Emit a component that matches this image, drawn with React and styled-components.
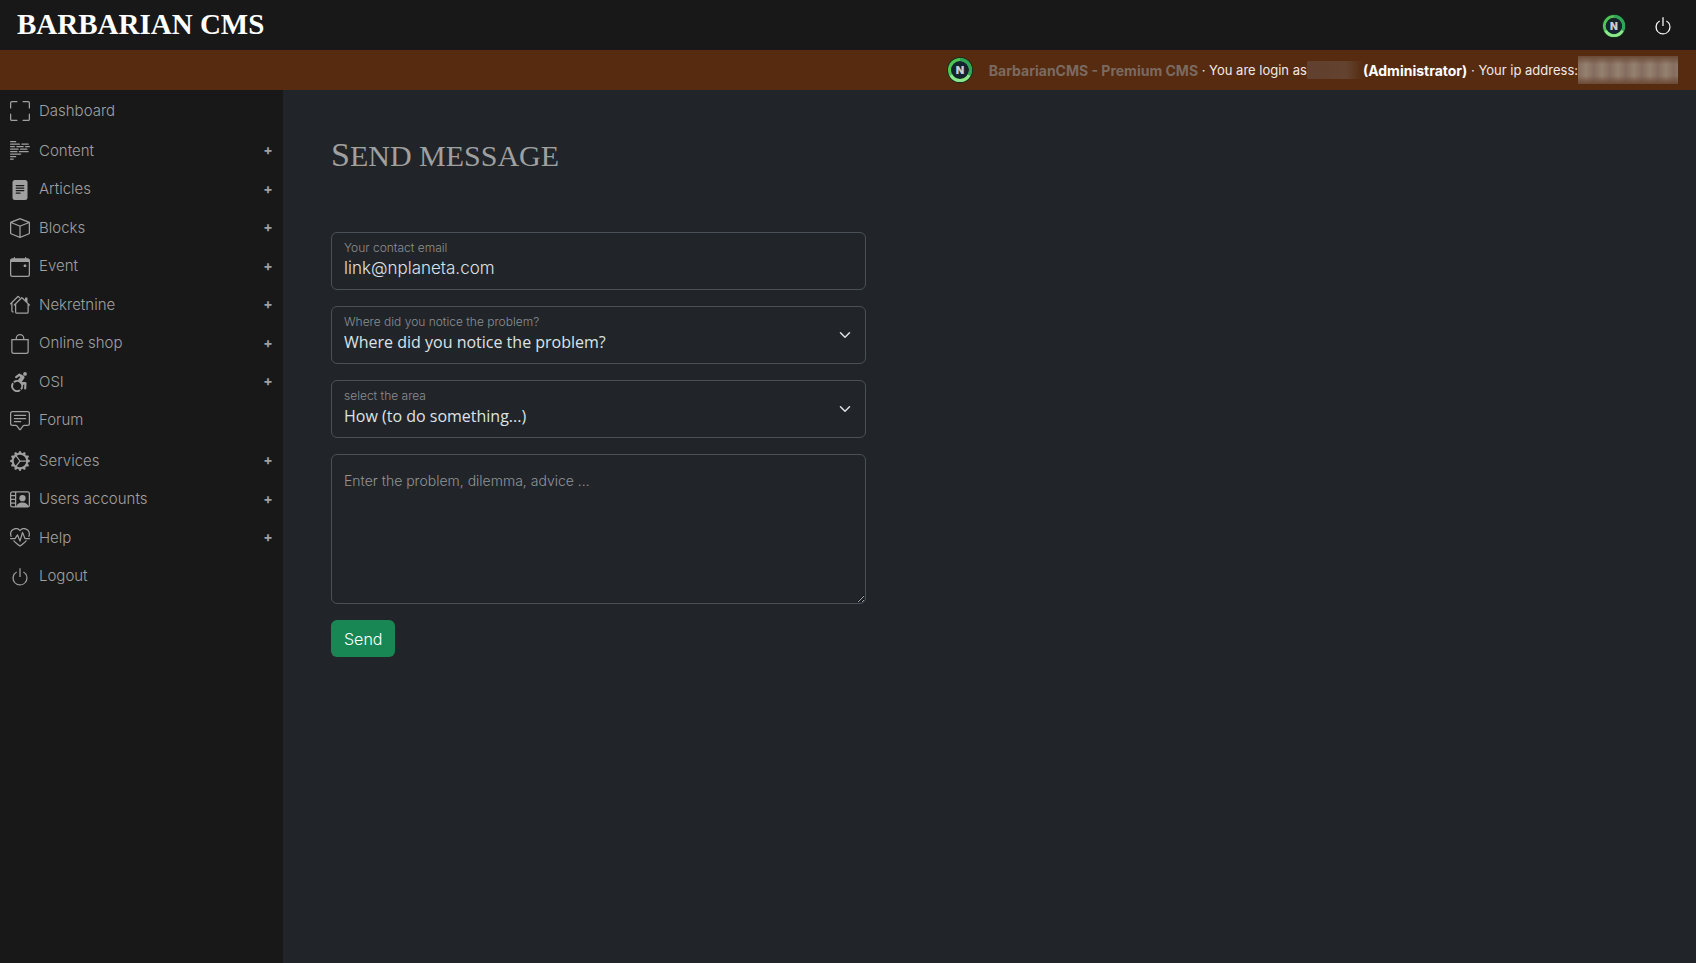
import { useState } from "react";
import styled, { createGlobalStyle } from "styled-components";
import {
  BsFullscreen,
  BsBodyText,
  BsFileTextFill,
  BsBox,
  BsCalendarEvent,
  BsHouses,
  BsBag,
  BsPersonWheelchair,
  BsChatSquareText,
  BsGearWideConnected,
  BsPersonVideo2,
  BsHeartPulse,
  BsPower,
} from "react-icons/bs";

const GlobalStyle = createGlobalStyle`
  * {
    box-sizing: border-box;
  }

  body {
    margin: 0;
    background: #212529;
    color: #dee2e6;
    font-family: Inter, "Open Sans", sans-serif;
    font-size: 16px;
    font-weight: 300;
  }
`;

const Page = styled.div`
  display: flex;
  flex-direction: column;
  min-height: 100vh;
`;

const Header = styled.header`
  display: flex;
  align-items: center;
  justify-content: space-between;
  height: 50px;
  padding: 0 23px 0 17px;
  background: #181818;
`;

const Logo = styled.a`
  padding-bottom: 2px;
  color: #ffffff;
  font-family: "Liberation Serif", serif;
  font-size: 29px;
  font-weight: 700;
  line-height: 48px;
  text-decoration: none;
  text-transform: uppercase;
`;

const HeaderLinks = styled.nav`
  display: flex;
  align-items: center;
  gap: 27px;
  padding-top: 2px;
`;

const IconLink = styled.a`
  display: flex;
  color: #ffffff;
  font-size: 20px;
`;

const InfoBar = styled.div`
  display: flex;
  align-items: center;
  justify-content: flex-end;
  height: 40px;
  padding-right: 18px;
  background: #562b10;
  color: #f1e9e4;
  font-size: 13px;
  font-weight: 400;
  white-space: pre;
`;

const BadgeLink = styled.a`
  display: flex;
  margin-right: 16px;
`;

const ProductLink = styled.a`
  color: #7b6a60;
  font-size: 14px;
  font-weight: 700;
  text-decoration: none;
`;

const Role = styled.strong`
  color: #ffffff;
  font-size: 14px;
  font-weight: 700;
`;

const Masked = styled.span`
  width: ${props => props.$wide ? '100px' : '56px'};
  height: ${props => props.$wide ? '28px' : '18px'};
  background: ${props => props.$wide
    ? 'linear-gradient(to bottom, #6b4a36, transparent 30%, transparent 70%, #6b4a36), repeating-linear-gradient(to right, #846c5e 0, #95816f 8px, #846c5e 16px)'
    : 'linear-gradient(to right, #60402e, #63432f 70%, #562b10)'};
`;

const Body = styled.div`
  display: flex;
  flex: 1;
`;

const Sidebar = styled.nav`
  flex: 0 0 283px;
  background: #181818;
`;

const MenuGroup = styled.ul`
  display: grid;
  grid-auto-rows: 38px 39px;
  margin: 0;
  padding: 2px 0 0;
  list-style: none;
`;

const MenuLink = styled.a`
  display: flex;
  align-items: center;
  height: 100%;
  padding: 0 10px;
  color: #a0a0a0;
  font-size: 15px;
  text-decoration: none;

  svg {
    width: 20px;
    height: 20px;
    margin-right: 9px;
  }

  &:hover {
    color: #ffffff;
  }
`;

const MenuText = styled.span`
  padding-bottom: 2px;
`;

const Plus = styled.span`
  width: 10px;
  margin-left: auto;
  padding-bottom: 3px;
  font-size: 14px;
  font-weight: 700;
  text-align: center;
`;

const Main = styled.main`
  flex: 1;
  padding: 46px 48px;
`;

const Title = styled.h1`
  margin: 0 0 57px;
  color: #a0a0a0;
  font-family: "Liberation Serif", serif;
  font-size: 30px;
  font-weight: 400;
  line-height: 38px;
  text-transform: uppercase;

  &::first-letter {
    font-size: 34px;
  }
`;

const Form = styled.form`
  display: flex;
  flex-direction: column;
  align-items: flex-start;
  gap: 16px;
  max-width: 535px;
`;

const Field = styled.div`
  position: relative;
  display: flex;
  flex-direction: column;
  width: 100%;
  height: 58px;
  padding: 7px 12px;
  border: 1px solid #495057;
  border-radius: 6px;
`;

const Label = styled.label`
  color: #8b8f93;
  font-size: 12px;
  line-height: 16px;
`;

const Input = styled.input`
  width: 100%;
  height: 24px;
  padding: 0;
  border: 0;
  outline: 0;
  background: none;
  color: #dee2e6;
  font: inherit;
  font-size: 17px;
`;

const Select = styled.select`
  width: 100%;
  height: 24px;
  padding: 0;
  border: 0;
  outline: 0;
  appearance: none;
  background: none;
  color: #dee2e6;
  font-family: "Open Sans", sans-serif;
  font-size: 16px;
`;

const Chevron = styled.svg`
  position: absolute;
  top: 22px;
  right: 12px;
  width: 16px;
  height: 12px;
  pointer-events: none;
`;

const Textarea = styled.textarea`
  width: 100%;
  height: 150px;
  padding: 16px 12px;
  border: 1px solid #495057;
  border-radius: 6px;
  outline: 0;
  background: none;
  color: #dee2e6;
  font: inherit;
  font-size: 14px;
  line-height: 20px;

  &::placeholder {
    color: #919497;
    opacity: 1;
  }
`;

const Button = styled.button`
  height: 37px;
  padding: 0 13px;
  border: 0;
  border-radius: 6px;
  background: #198754;
  color: #ffffff;
  font: inherit;

  &:hover {
    cursor: pointer;
  }
`;

const menu = [
  [
    { name: "Dashboard", icon: BsFullscreen },
  ],
  [
    { name: "Content", icon: BsBodyText, hasChildren: true },
    { name: "Articles", icon: BsFileTextFill, hasChildren: true },
    { name: "Blocks", icon: BsBox, hasChildren: true },
    { name: "Event", icon: BsCalendarEvent, hasChildren: true },
    { name: "Nekretnine", icon: BsHouses, hasChildren: true },
    { name: "Online shop", icon: BsBag, hasChildren: true },
    { name: "OSI", icon: BsPersonWheelchair, hasChildren: true },
    { name: "Forum", icon: BsChatSquareText },
  ],
  [
    { name: "Services", icon: BsGearWideConnected, hasChildren: true },
    { name: "Users accounts", icon: BsPersonVideo2, hasChildren: true },
    { name: "Help", icon: BsHeartPulse, hasChildren: true },
    { name: "Logout", icon: BsPower },
  ],
];

const Badge = ({ size }) => (
  <svg width={size} height={size} viewBox="0 0 26 26" aria-hidden="true">
    <circle cx="13" cy="13" r="13" fill="#12301f" />
    <circle cx="13" cy="13" r="10.5" fill="#14232e" stroke="#4fc653" strokeWidth="3" />
    <path d="M13 2.5a10.5 10.5 0 0 1 9.1 15.7" fill="none" stroke="#2fa557" strokeWidth="3" />
    <path d="M3.9 18.2a10.5 10.5 0 0 0 18.2 0" fill="none" stroke="#8ee58c" strokeWidth="3" />
    <text x="13" y="17" textAnchor="middle" fill="#c9ced6" fontFamily="Inter, sans-serif" fontSize="11" fontWeight="900">N</text>
  </svg>
);

const FieldChevron = () => (
  <Chevron viewBox="0 0 16 16" aria-hidden="true">
    <path d="m2 5 6 6 6-6" fill="none" stroke="#dee2e6" strokeWidth="2" strokeLinecap="round" strokeLinejoin="round" />
  </Chevron>
);

const App = () => {
  const [email, setEmail] = useState("link@nplaneta.com");
  const [message, setMessage] = useState("");

  return <Page>
    <GlobalStyle />
    <Header>
      <Logo href="#">Barbarian CMS</Logo>
      <HeaderLinks>
        <IconLink href="#" aria-label="Profile"><Badge size={24} /></IconLink>
        <IconLink href="#" aria-label="Logout"><BsPower /></IconLink>
      </HeaderLinks>
    </Header>
    <InfoBar>
      <BadgeLink href="#" aria-label="Home"><Badge size={26} /></BadgeLink>
      <ProductLink href="#">BarbarianCMS - Premium CMS</ProductLink>
      <span> · You are login as</span>
      <Masked />
      <Role>(Administrator)</Role>
      <span> · Your ip address:</span>
      <Masked $wide />
    </InfoBar>
    <Body>
      <Sidebar>
        {menu.map((group, index) => (
          <MenuGroup key={index}>
            {group.map(item => (
              <li key={item.name}>
                <MenuLink href="#">
                  <item.icon />
                  <MenuText>{item.name}</MenuText>
                  {item.hasChildren && <Plus>+</Plus>}
                </MenuLink>
              </li>
            ))}
          </MenuGroup>
        ))}
      </Sidebar>
      <Main>
        <Title>Send message</Title>
        <Form onSubmit={e => e.preventDefault()}>
          <Field>
            <Label htmlFor="email">Your contact email</Label>
            <Input id="email" type="email" value={email} onChange={e => setEmail(e.target.value)} />
          </Field>
          <Field>
            <Label htmlFor="place">Where did you notice the problem?</Label>
            <Select id="place">
              <option>Where did you notice the problem?</option>
            </Select>
            <FieldChevron />
          </Field>
          <Field>
            <Label htmlFor="area">select the area</Label>
            <Select id="area">
              <option>How (to do something...)</option>
            </Select>
            <FieldChevron />
          </Field>
          <Textarea
            aria-label="Message"
            placeholder="Enter the problem, dilemma, advice ..."
            value={message}
            onChange={e => setMessage(e.target.value)}
          />
          <Button type="submit">Send</Button>
        </Form>
      </Main>
    </Body>
  </Page>;
};

export default App;
